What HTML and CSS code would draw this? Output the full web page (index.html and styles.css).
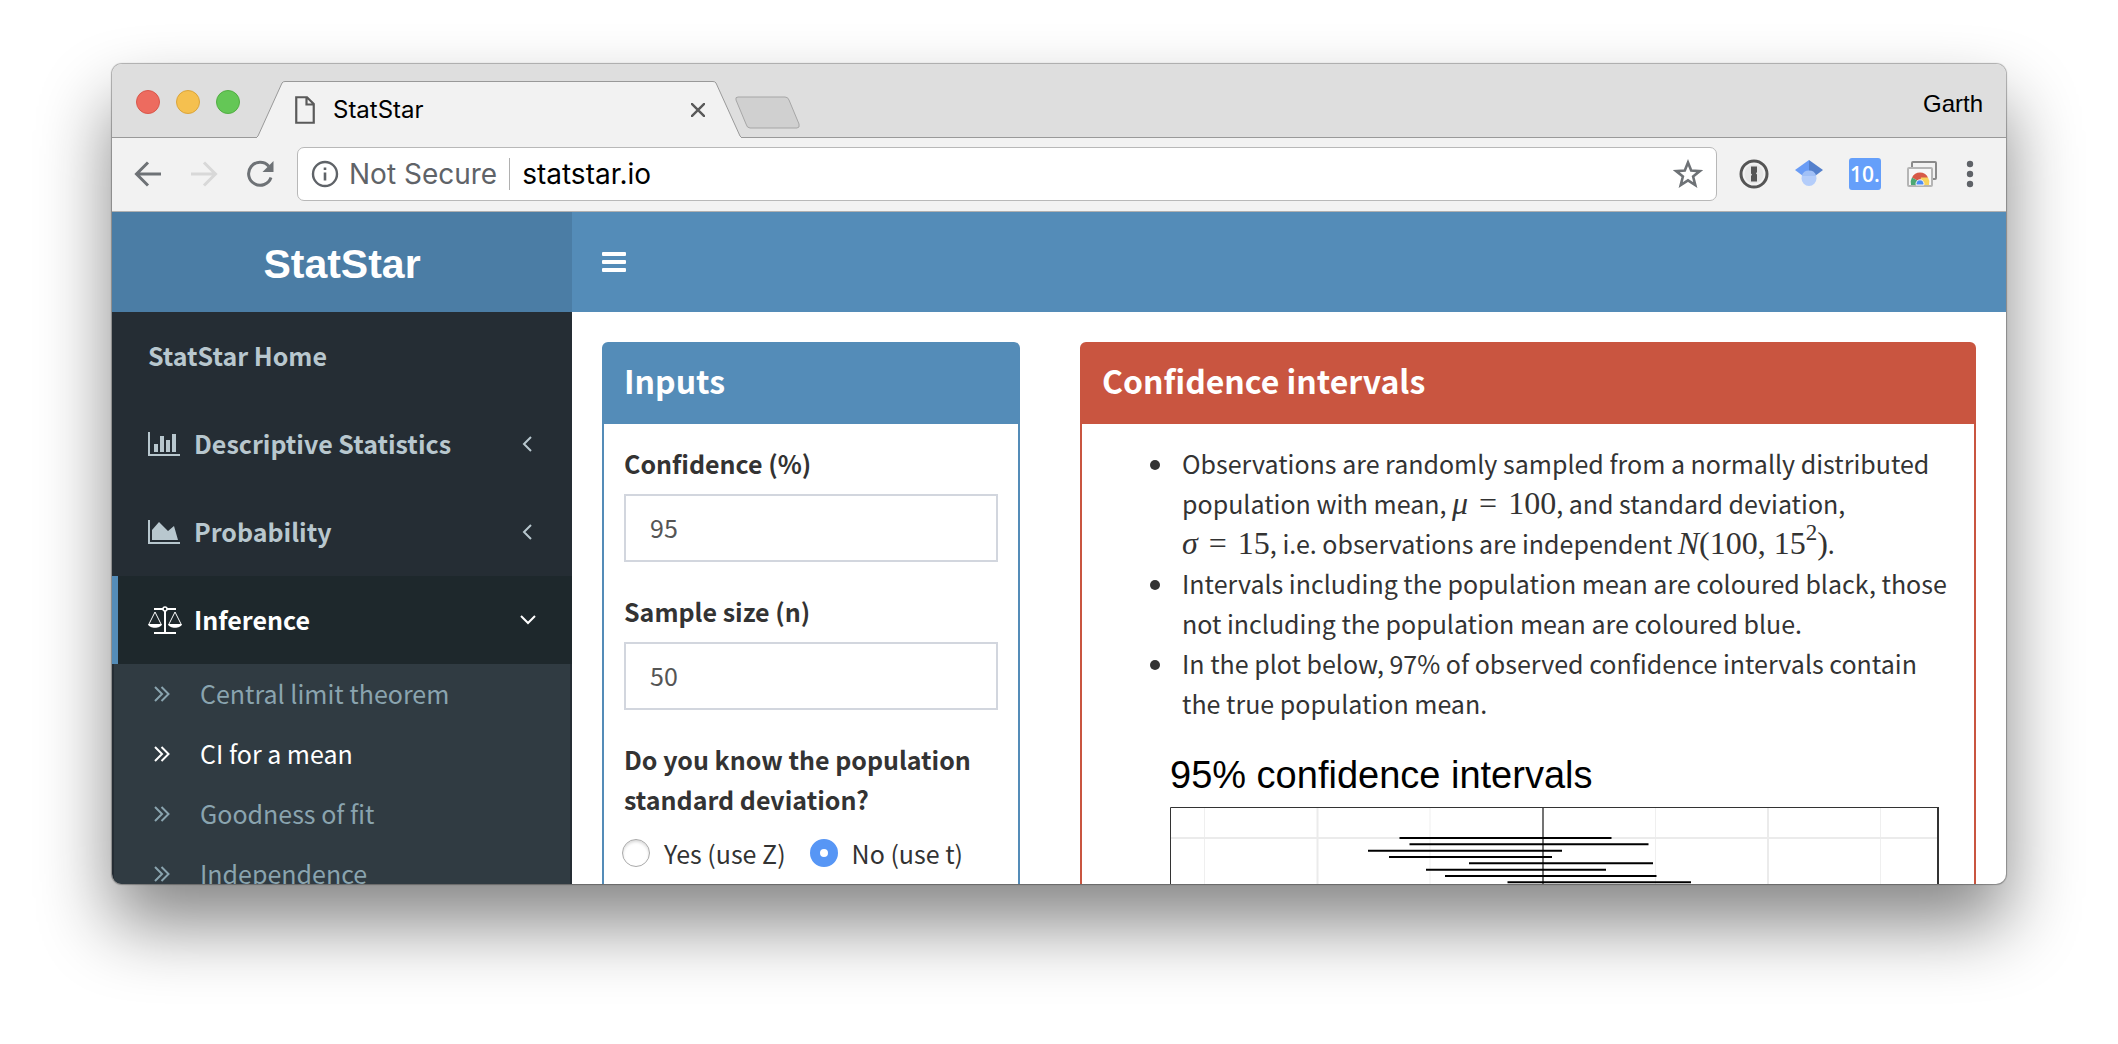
FILE: index.html
```html
<!DOCTYPE html>
<html lang="en">
<head>
<meta charset="utf-8">
<title>StatStar</title>
<link rel="stylesheet" href="styles.css">
</head>
<body>
<div class="window">
  <div class="tabstrip">
    <div class="lights">
      <button class="light light-close" aria-label="Close window"></button>
      <button class="light light-min" aria-label="Minimise window"></button>
      <button class="light light-max" aria-label="Zoom window"></button>
    </div>
    <div class="tab">
      <svg class="tab-edge" viewBox="0 0 28 57" width="28" height="57" aria-hidden="true"><path d="M0 56 L1 55 L25 2 Q26 .5 28 .5 V57 H0Z" fill="#f2f2f2"/><path d="M0 56 L1 55 L25 2 Q26 .5 28 .5" fill="none" stroke="#999"/></svg>
      <div class="tab-body">
        <svg class="page-icon" viewBox="0 0 20 28" width="20" height="28" aria-hidden="true"><path d="M1.250 1.250 H12 L18.750 8 V26.750 H1.250Z M11.500 1.500 V8.500 H18.500" fill="none" stroke="#5a5a5a" stroke-width="2.200"/></svg>
        <span class="tab-title">StatStar</span>
        <button class="icon-btn" aria-label="Close tab"><svg viewBox="0 0 14 14" width="14" height="14"><path d="M0 0 L14 14 M14 0 L0 14" stroke="#5a5a5a" stroke-width="2.400"/></svg></button>
      </div>
      <svg class="tab-edge" viewBox="0 0 28 57" width="28" height="57" aria-hidden="true"><path d="M28 56 L27 55 L3 2 Q2 .5 0 .5 V57 H28Z" fill="#f2f2f2"/><path d="M28 56 L27 55 L3 2 Q2 .5 0 .5" fill="none" stroke="#999"/></svg>
    </div>
    <button class="icon-btn new-tab" aria-label="New tab"><svg viewBox="0 0 68 34" width="68" height="34"><path d="M4 1 H51 Q54 1 55 4 L65 28 Q66 32 63 32 H16 Q13 32 12 28 L2 4 Q1 1 4 1Z" fill="#d0d0d0" stroke="#a6a6a6"/></svg></button>
    <button class="profile">Garth</button>
  </div>

  <div class="toolbar">
    <button class="icon-btn" aria-label="Back"><svg viewBox="0 0 28 28" width="28" height="28"><path d="M27 14 H3 M14 2.500 L2.500 14 L14 25.500" fill="none" stroke="#6e7276" stroke-width="3"/></svg></button>
    <button class="icon-btn" aria-label="Forward"><svg viewBox="0 0 28 28" width="28" height="28"><path d="M1 14 H25 M14 2.500 L25.500 14 L14 25.500" fill="none" stroke="#d8d8d8" stroke-width="3"/></svg></button>
    <button class="icon-btn" aria-label="Reload"><svg viewBox="0 0 28 28" width="28" height="28"><path d="M22.800 6.200 A11.500 11.500 0 1 0 25 17.500" fill="none" stroke="#6e7276" stroke-width="3"/><path d="M27.500 1 V12 H16.500Z" fill="#6e7276"/></svg></button>
    <form class="omnibox">
      <svg viewBox="0 0 28 28" width="28" height="28" aria-hidden="true"><circle cx="14" cy="14" r="12" fill="none" stroke="#5f6368" stroke-width="2.400"/><path d="M14 12.500 V20.500 M14 7.500 V10" stroke="#5f6368" stroke-width="2.600"/></svg>
      <span class="security">Not Secure</span>
      <input class="address" type="text" value="statstar.io" aria-label="Address">
      <button class="icon-btn" type="button" aria-label="Bookmark this page"><svg viewBox="0 0 30 30" width="30" height="30"><path d="M15 3.500 L18.200 11.600 L26.800 12.100 L20.100 17.600 L22.300 26 L15 21.300 L7.700 26 L9.900 17.600 L3.200 12.100 L11.800 11.600Z" fill="none" stroke="#6e7276" stroke-width="2.600"/></svg></button>
    </form>
    <div class="extensions">
      <button class="icon-btn" aria-label="Password manager"><svg viewBox="0 0 30 30" width="30" height="30"><circle cx="15" cy="15" r="13" fill="#f2f2f2" stroke="#555" stroke-width="3"/><circle cx="15" cy="15" r="9.500" fill="#e6e6e6"/><path d="M12 7.500 H18 V13 L17 14.500 L18 15.500 V22.500 H12 V17 L13 15.500 L12 14.500Z" fill="#555"/></svg></button>
      <button class="icon-btn" aria-label="Scholar"><svg viewBox="0 0 30 30" width="30" height="30"><path d="M15 1 L1 11 L9 17 H15Z" fill="#6a9cf5"/><path d="M15 1 L29 11 L21 17 H15Z" fill="#5480cc"/><circle cx="15" cy="19.500" r="7.500" fill="#b4cdfa"/><path d="M7.800 17 A7.500 7.500 0 0 1 22.200 17Z" fill="#a1c0f6"/></svg></button>
      <button class="icon-btn doi" aria-label="DOI lookup">10.</button>
      <button class="icon-btn" aria-label="Remote desktop"><svg viewBox="0 0 32 30" width="32" height="30"><rect x="6" y="3" width="24" height="17" rx="1" fill="#f2f2f2" stroke="#8a8a8a" stroke-width="2"/><rect x="2" y="9" width="24" height="18" rx="1" fill="#f7f7f7" stroke="#b5b5b5" stroke-width="2"/><path d="M14 23 L6 18.500 A9 9 0 0 1 22 18.500Z" fill="#d75a48"/><path d="M14 23 L6 18.500 A9 9 0 0 0 5 26 H11Z" fill="#4ca874"/><path d="M14 23 L15 18.500 H22 A9 9 0 0 1 23 26 H17Z" fill="#f7d35c"/><path d="M10.200 26 A4 4 0 1 1 17.800 26Z" fill="#4d8df5" stroke="#f7f7f7"/></svg></button>
    </div>
    <button class="icon-btn" aria-label="Menu"><svg viewBox="0 0 8 28" width="8" height="28"><g fill="#5f6368"><circle cx="4" cy="4" r="3.200"/><circle cx="4" cy="14" r="3.200"/><circle cx="4" cy="24" r="3.200"/></g></svg></button>
  </div>

  <div class="app">
    <aside class="sidebar">
      <a class="logo" href="#">StatStar</a>
      <nav>
        <a class="item" href="#"><span class="item-label">StatStar Home</span></a>
        <a class="item" href="#">
          <svg class="item-icon" viewBox="0 0 34 24" width="34" height="24" aria-hidden="true"><path d="M0 0 H2 V22 H32 V24 H0Z M6 12 H10 V20 H6Z M12 4 H16 V20 H12Z M18 8 H22 V20 H18Z M24 2 H28 V20 H24Z" fill="#b8c7ce"/></svg>
          <span class="item-label">Descriptive Statistics</span>
          <svg class="chevron" viewBox="0 0 16 16" width="16" height="16" aria-hidden="true"><path d="M11 1 L4 8 L11 15" fill="none" stroke="#b8c7ce" stroke-width="2"/></svg>
        </a>
        <a class="item" href="#">
          <svg class="item-icon" viewBox="0 0 34 24" width="34" height="24" aria-hidden="true"><path d="M0 0 H2 V22 H32 V24 H0Z M4 20 V10 L11 2 L20 11 L26 6 L30 20Z" fill="#b8c7ce"/></svg>
          <span class="item-label">Probability</span>
          <svg class="chevron" viewBox="0 0 16 16" width="16" height="16" aria-hidden="true"><path d="M11 1 L4 8 L11 15" fill="none" stroke="#b8c7ce" stroke-width="2"/></svg>
        </a>
        <a class="item item-active" href="#">
          <svg class="item-icon" viewBox="0 0 34 28" width="34" height="28" aria-hidden="true"><g fill="none" stroke="#fff"><path d="M6 3 H28 M6 27 H28 M17 4 V27" stroke-width="2"/><circle cx="17" cy="3" r="2" fill="#1e282c" stroke-width="1.500"/><path d="M7 6 L1 18 M7 6 L13 18 M27 6 L21 18 M27 6 L33 18"/></g><path d="M0 18 H14 C13 23 1 23 0 18Z M20 18 H34 C33 23 21 23 20 18Z" fill="#fff"/></svg>
          <span class="item-label">Inference</span>
          <svg class="chevron" viewBox="0 0 16 16" width="16" height="16" aria-hidden="true"><path d="M1 4 L8 11 L15 4" fill="none" stroke="#fff" stroke-width="2"/></svg>
        </a>
        <div class="submenu">
          <a class="subitem" href="#"><svg viewBox="0 0 16 16" width="16" height="16" aria-hidden="true"><path d="M1 1 L8 8 L1 15 M7.500 1 L14.500 8 L7.500 15" fill="none" stroke="currentColor" stroke-width="2"/></svg><span class="item-label">Central limit theorem</span></a>
          <a class="subitem subitem-active" href="#"><svg viewBox="0 0 16 16" width="16" height="16" aria-hidden="true"><path d="M1 1 L8 8 L1 15 M7.500 1 L14.500 8 L7.500 15" fill="none" stroke="currentColor" stroke-width="2"/></svg><span class="item-label">CI for a mean</span></a>
          <a class="subitem" href="#"><svg viewBox="0 0 16 16" width="16" height="16" aria-hidden="true"><path d="M1 1 L8 8 L1 15 M7.500 1 L14.500 8 L7.500 15" fill="none" stroke="currentColor" stroke-width="2"/></svg><span class="item-label">Goodness of fit</span></a>
          <a class="subitem" href="#"><svg viewBox="0 0 16 16" width="16" height="16" aria-hidden="true"><path d="M1 1 L8 8 L1 15 M7.500 1 L14.500 8 L7.500 15" fill="none" stroke="currentColor" stroke-width="2"/></svg><span class="item-label">Independence</span></a>
        </div>
      </nav>
    </aside>

    <div class="main">
      <header class="navbar">
        <button class="icon-btn" aria-label="Toggle navigation"><svg viewBox="0 0 24 20" width="24" height="20"><path d="M0 1 Q0 0 1 0 H23 Q24 0 24 1 V3 Q24 4 23 4 H1 Q0 4 0 3Z M0 9 Q0 8 1 8 H23 Q24 8 24 9 V11 Q24 12 23 12 H1 Q0 12 0 11Z M0 17 Q0 16 1 16 H23 Q24 16 24 17 V19 Q24 20 23 20 H1 Q0 20 0 19Z" fill="#fff"/></svg></button>
      </header>
      <div class="content">
        <div class="column">
          <form class="card card-primary">
            <h3 class="card-title">Inputs</h3>
            <div class="card-body">
              <div class="field">
                <label for="confidence">Confidence (%)</label>
                <input id="confidence" type="text" value="95">
              </div>
              <div class="field">
                <label for="size">Sample size (n)</label>
                <input id="size" type="text" value="50">
              </div>
              <fieldset>
                <legend>Do you know the population standard deviation?</legend>
                <div class="choices">
                  <label><input type="radio" name="sd">Yes (use Z)</label>
                  <label><input type="radio" name="sd" checked>No (use t)</label>
                </div>
              </fieldset>
            </div>
          </form>
        </div>
        <div class="column">
          <section class="card card-danger">
            <h3 class="card-title">Confidence intervals</h3>
            <div class="card-body">
              <ul class="notes">
                <li>Observations are randomly sampled from a normally distributed population with mean, <span class="math"><i>μ</i><span class="rel">=</span>100</span>, and standard deviation, <br><span class="math"><i>σ</i><span class="rel">=</span>15</span>, i.e. observations are independent <span class="math"><i>N</i>(100, 15<sup>2</sup>)</span>.</li>
                <li>Intervals including the population mean are coloured black, those not including the population mean are coloured blue.</li>
                <li>In the plot below, 97% of observed confidence intervals contain the true population mean.</li>
              </ul>
              <figure class="plot">
                <figcaption>95% confidence intervals</figcaption>
                <svg viewBox="0 0 769 120" role="img" aria-label="Observed confidence intervals around the population mean">
                  <path d="M34.500 1 V120 M260 1 V120 M485.500 1 V120 M710.500 1 V120" stroke="#efefef"/>
                  <path d="M147.500 1 V120 M598 1 V120 M1 31 H768" stroke="#ebebeb" stroke-width="2"/>
                  <path d="M373 1 V120" stroke="#000" stroke-opacity=".55" stroke-width="2"/>
                  <path d="M229.500 31 H441.500 M239.500 37.300 H478.500 M198 43.700 H392 M219 50 H382 M299 56.300 H483 M256 62.700 H436 M275 69 H486.500 M337.500 75.300 H521 M280 81.600 H470" stroke="#000" stroke-width="2"/>
                  <path d="M.5 120 V.5 H768" fill="none" stroke="#333"/>
                  <path d="M768 0 V120" stroke="#333" stroke-width="2"/>
                </svg>
              </figure>
            </div>
          </section>
        </div>
      </div>
    </div>
  </div>
</div>
</body>
</html>
```
FILE: styles.css
```css
* { box-sizing: border-box; }

body {
  margin: 0;
  height: 100vh;
  padding: 64px 112px 160px;
  background: #fff;
  color: #333;
  font: 25px/40px "Noto Sans CJK SC", sans-serif;
  overflow: hidden;
}

a { color: inherit; text-decoration: none; }
button { font: inherit; color: inherit; }

.window {
  height: 100%;
  display: flex;
  flex-direction: column;
  border-radius: 10px;
  overflow: hidden;
  background: #fff;
  box-shadow: 0 0 1px 1px rgba(0, 0, 0, .3), 0 40px 72px rgba(0, 0, 0, .48);
}

.icon-btn {
  display: flex;
  align-items: center;
  justify-content: center;
  padding: 0;
  border: 0;
  background: none;
}

/* Tab strip */
.tabstrip {
  flex: none;
  display: flex;
  align-items: flex-end;
  height: 74px;
  padding: 0 23px;
  background: #dedede;
  border-bottom: 1px solid #999;
  color: #000;
}
.lights {
  display: flex;
  gap: 16px;
  align-self: center;
  padding: 3px 17px 0 1px;
}
.light {
  width: 24px;
  height: 24px;
  padding: 0;
  border: 1px solid;
  border-radius: 50%;
}
.light-close { background: #ed6b5f; border-color: #d9574b; }
.light-min { background: #f5c04f; border-color: #dba53b; }
.light-max { background: #64c756; border-color: #52ae43; }

.tab { display: flex; margin-bottom: -1px; width: 484px; }
.tab-edge { flex: none; }
.tab-body {
  flex: 1;
  display: flex;
  align-items: center;
  gap: 18px;
  padding: 0 8px 0 10px;
  background: #f2f2f2;
  border-top: 1px solid #999;
}
.tab-title { flex: 1; font: 24px/28px Inter, sans-serif; }
.new-tab { margin: 0 0 7px -7px; }
.profile {
  margin-left: auto;
  padding: 6px 0 0;
  border: 0;
  background: none;
  align-self: center;
  font: 24px/28px "Liberation Sans", sans-serif;
}

/* Toolbar */
.toolbar {
  flex: none;
  display: flex;
  align-items: center;
  gap: 28px;
  height: 74px;
  padding: 0 32px 2px 22px;
  background: #f2f2f2;
  border-bottom: 1px solid #b0b0b0;
}
.omnibox {
  flex: 1;
  display: flex;
  align-items: center;
  gap: 10px;
  height: 54px;
  margin-left: -5px;
  padding: 0 13px;
  background: #fff;
  border: 1px solid #b8b8b8;
  border-radius: 7px;
  font: 28px/32px Inter, sans-serif;
}
.security {
  padding-right: 12px;
  border-right: 1px solid #b0b0b0;
  color: #5f6368;
}
.address {
  flex: 1;
  min-width: 0;
  padding: 0 2px;
  border: 0;
  background: none;
  color: #000;
  font: inherit;
}
.extensions { display: flex; align-items: center; gap: 25px; margin-left: -6px; }
.doi {
  width: 32px;
  height: 32px;
  border-radius: 3px;
  background: #659ffa;
  color: #fff;
  font: 600 21px/32px "Open Sans", sans-serif;
}

/* App shell */
.app { flex: 1; min-height: 0; display: flex; overflow: hidden; }
.sidebar { flex: none; width: 460px; background: #252d34; color: #b8c7ce; }
.logo {
  display: block;
  height: 100px;
  padding-top: 2px;
  background: #4b7da5;
  color: #fff;
  text-align: center;
  font: bold 41px/100px "Liberation Sans", sans-serif;
}
.item {
  display: flex;
  align-items: center;
  height: 88px;
  padding: 0 36px 0 30px;
  border-left: 6px solid transparent;
  font-weight: bold;
}
.item-icon { flex: none; margin-right: 12px; }
.item-label { padding-bottom: 2px; }
.chevron { margin-left: auto; }
.item-active {
  background: #1e282c;
  border-color: #548cb8;
  color: #fff;
}
.submenu { margin: 0 2px; background: #303b42; color: #8aa4af; }
.subitem {
  display: flex;
  align-items: center;
  gap: 30px;
  height: 60px;
  padding-left: 40px;
}
.subitem-active { color: #fff; }

.main { flex: 1; min-width: 0; display: flex; flex-direction: column; }
.navbar {
  flex: none;
  display: flex;
  height: 100px;
  padding: 0 30px;
  background: #548cb8;
}
.content {
  flex: 1;
  min-height: 0;
  display: grid;
  grid-template-columns: minmax(0, 1fr) minmax(0, 2fr);
}
.column { display: flex; padding: 30px 30px 0; }

/* Cards */
.card {
  flex: 1;
  min-width: 0;
  border: 2px solid;
  border-radius: 6px 6px 0 0;
}
.card-primary { border-color: #548cb8; }
.card-danger { border-color: #c95540; }
.card-title {
  margin: 0;
  padding: 14px 20px 22px;
  color: #fff;
  font-size: 32px;
  line-height: 44px;
}
.card-primary .card-title { background: #548cb8; }
.card-danger .card-title { background: #c95540; }
.card-body { padding: 19px 20px 20px; }

.field { margin-bottom: 29px; }
.field label, legend { display: block; margin-bottom: 11px; font-weight: bold; }
.field input {
  display: block;
  width: 100%;
  height: 68px;
  padding: 0 24px 2px;
  border: 2px solid #d2d6de;
  border-radius: 0;
  background: #fff;
  color: #555;
  font: inherit;
}
fieldset { margin: 0; padding: 0; border: 0; min-width: 0; }
legend { padding: 0; }
.choices { display: flex; gap: 24px; padding-top: 3px; margin-left: -2px; }
.choices label { display: flex; align-items: center; gap: 14px; white-space: nowrap; }
input[type="radio"] {
  appearance: none;
  flex: none;
  width: 28px;
  height: 28px;
  margin: 0;
  border: 1px solid #aaa;
  border-radius: 50%;
  background: #fff;
  box-shadow: inset 0 2px 3px rgba(0, 0, 0, .15);
}
input[type="radio"]:checked {
  border: 10px solid #5796f5;
  box-shadow: none;
}

.notes { margin: 0; padding-left: 80px; list-style: none; }
.notes li::before {
  content: "";
  display: inline-block;
  width: 10px;
  height: 10px;
  margin: 0 22px 0 -32px;
  border-radius: 50%;
  background: #333;
  vertical-align: 4px;
}
.math {
  font: 32px/32px "Liberation Serif", serif;
  white-space: nowrap;
}
.rel { padding: 0 11px; }
.math sup { font-size: 23px; line-height: 16px; vertical-align: 14px; }

.plot { margin: 28px 15px 0 68px; }
.plot figcaption {
  margin-bottom: 8px;
  color: #000;
  font: 38px/48px "Liberation Sans", sans-serif;
}
.plot svg { display: block; width: 100%; }
```
